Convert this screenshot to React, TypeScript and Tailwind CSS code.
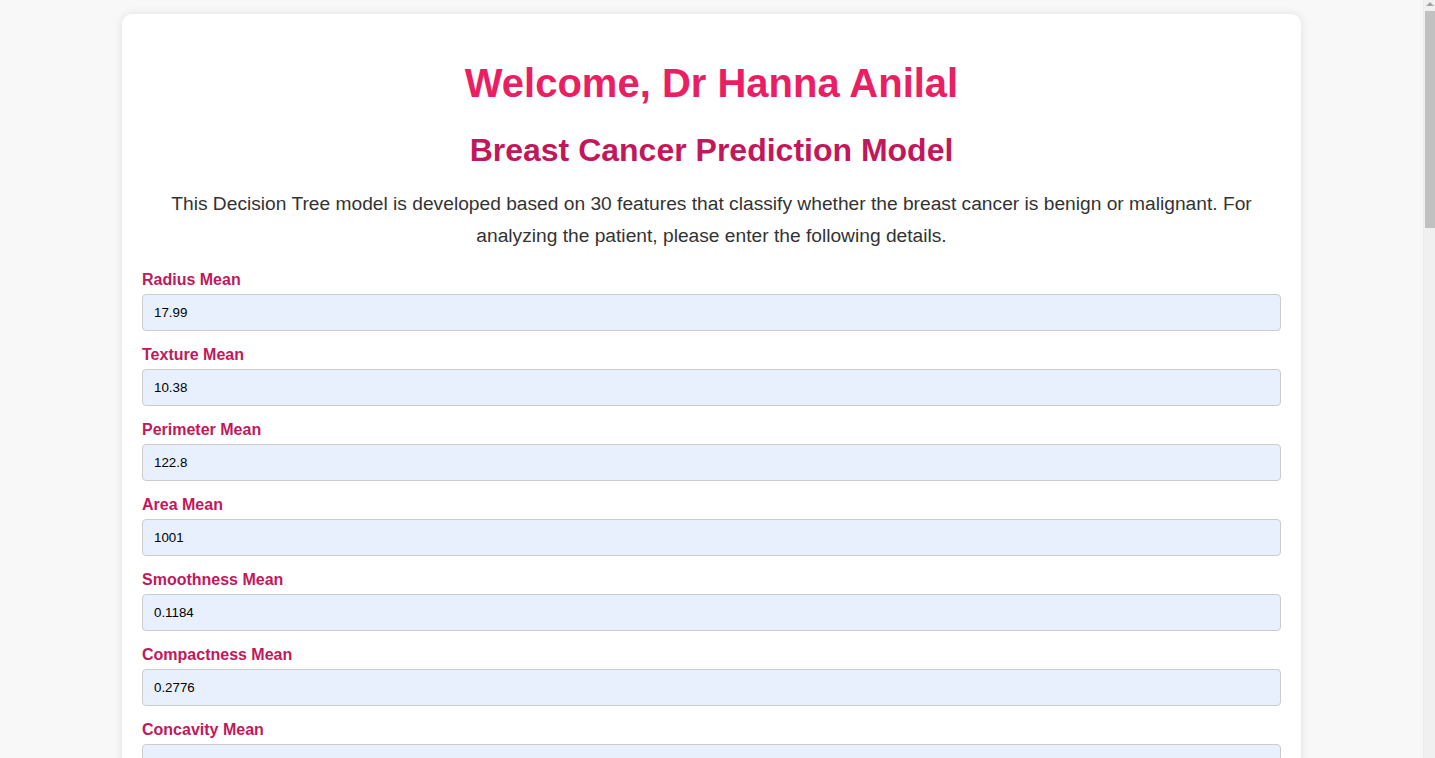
const features = [
  { label: "Radius Mean", value: "17.99" },
  { label: "Texture Mean", value: "10.38" },
  { label: "Perimeter Mean", value: "122.8" },
  { label: "Area Mean", value: "1001" },
  { label: "Smoothness Mean", value: "0.1184" },
  { label: "Compactness Mean", value: "0.2776" },
  { label: "Concavity Mean", value: "0.3001" },
  { label: "Concave Points Mean", value: "0.1471" },
  { label: "Symmetry Mean", value: "0.2419" },
  { label: "Fractal Dimension Mean", value: "0.07871" },
  { label: "Radius SE", value: "1.095" },
  { label: "Texture SE", value: "0.9053" },
  { label: "Perimeter SE", value: "8.589" },
  { label: "Area SE", value: "153.4" },
  { label: "Smoothness SE", value: "0.006399" },
  { label: "Compactness SE", value: "0.04904" },
  { label: "Concavity SE", value: "0.05373" },
  { label: "Concave Points SE", value: "0.01587" },
  { label: "Symmetry SE", value: "0.03003" },
  { label: "Fractal Dimension SE", value: "0.006193" },
  { label: "Radius Worst", value: "25.38" },
  { label: "Texture Worst", value: "17.33" },
  { label: "Perimeter Worst", value: "184.6" },
  { label: "Area Worst", value: "2019" },
  { label: "Smoothness Worst", value: "0.1622" },
  { label: "Compactness Worst", value: "0.6656" },
  { label: "Concavity Worst", value: "0.7119" },
  { label: "Concave Points Worst", value: "0.2654" },
  { label: "Symmetry Worst", value: "0.4601" },
  { label: "Fractal Dimension Worst", value: "0.1189" },
];

// Classic browser scrollbar drawn over the right edge
const FakeScrollbar = () => (
  <div className="fixed top-0 right-0 h-screen w-[12px] bg-[#f0f0f0] border-l border-[#ebebeb]">
    <div className="flex justify-center pt-[2px]">
      <div className="w-0 h-0 border-l-[4px] border-r-[4px] border-b-[4px] border-l-transparent border-r-transparent border-b-[#a3a3a3]" />
    </div>
    <div className="ml-[1px] mt-[5px] h-[217px] w-[10px] bg-[#c1c1c1]" />
  </div>
);

const App = () => {
  return (
    <div className="min-h-screen bg-[#f8f8f8] font-['Liberation_Sans',Arial,sans-serif] pt-[14px] pb-[14px] pr-[12px]">
      <div className="mx-auto w-[1179px] bg-white rounded-[10px] shadow-[0_0_10px_rgba(0,0,0,0.1)] p-5">
        {/* Header */}
        <h1 className="mt-[26px] mb-[26px] text-center text-[40px] leading-[46px] font-bold text-[#e91e63]">
          Welcome, Dr Hanna Anilal
        </h1>
        <h2 className="mb-[19px] text-center text-[32px] leading-[37px] font-bold text-[#c2185b]">
          Breast Cancer Prediction Model
        </h2>
        <p className="mb-[19px] px-3 text-center text-[19.2px] leading-[32px] text-[#333]">
          This Decision Tree model is developed based on 30 features that classify whether the breast cancer is benign or malignant. For analyzing the patient, please enter the following details.
        </p>

        {/* Feature inputs */}
        <form>
          {features.map((f) => (
            <div key={f.label} className="mb-[15px]">
              <label className="block mb-[5px] text-[16px] leading-[18px] font-bold text-[#c2185b]">
                {f.label}
              </label>
              <input
                type="text"
                defaultValue={f.value}
                className="block w-full h-[37px] px-[11px] bg-[#e8f0fe] border border-[#ccc] rounded-[4px] text-[13.33px] text-black outline-none"
              />
            </div>
          ))}
          <button
            type="button"
            className="block w-full py-3 rounded-[4px] bg-[#e91e63] text-white text-[16px] font-bold"
          >
            Predict
          </button>
        </form>
      </div>
      <FakeScrollbar />
    </div>
  );
};

export default App;
